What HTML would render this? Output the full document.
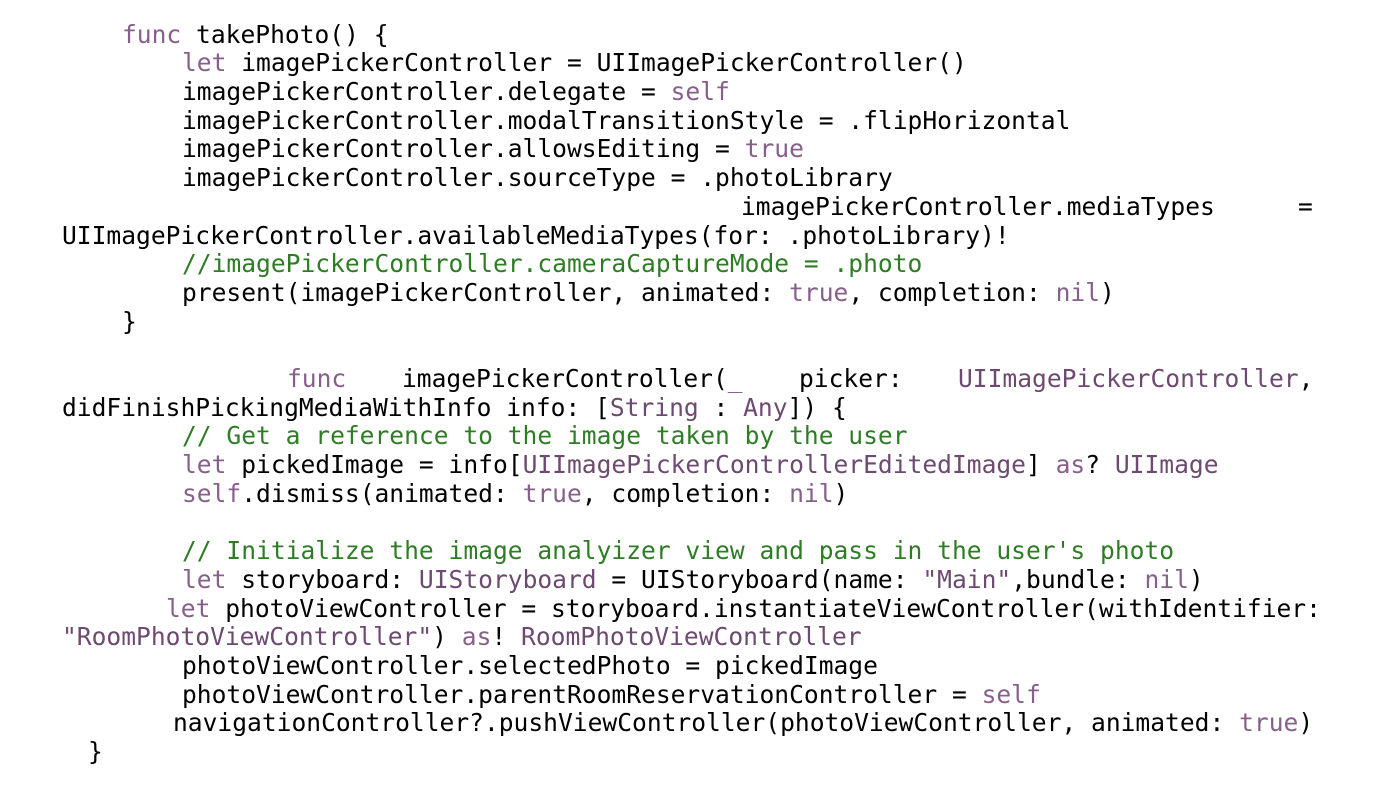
<!DOCTYPE html>
<html><head><meta charset="utf-8"><style>
body{margin:0;width:1400px;height:805px;background:#fff;position:relative;overflow:hidden;font-family:"DejaVu Sans Mono","Liberation Mono",monospace;font-size:24.6px;color:#000}
.l{position:absolute;white-space:pre;line-height:28.7px;height:28.7px}
.k{color:#86608a}.t{color:#6d4a70}.c{color:#2e7d25}.s{color:#6d4a70}
</style></head><body>
<div class="l" style="left:122px;top:20.6px"><span class="k">func</span> takePhoto() {</div>
<div class="l" style="left:182px;top:49.3px"><span class="k">let</span> imagePickerController = UIImagePickerController()</div>
<div class="l" style="left:182px;top:78px">imagePickerController.delegate = <span class="k">self</span></div>
<div class="l" style="left:182px;top:106.7px">imagePickerController.modalTransitionStyle = .flipHorizontal</div>
<div class="l" style="left:182px;top:135.4px">imagePickerController.allowsEditing = <span class="k">true</span></div>
<div class="l" style="left:182px;top:164.1px">imagePickerController.sourceType = .photoLibrary</div>
<div class="l" style="left:741px;top:192.8px">imagePickerController.mediaTypes</div>
<div class="l" style="left:1298px;top:192.8px">=</div>
<div class="l" style="left:62px;top:221.5px">UIImagePickerController.availableMediaTypes(for: .photoLibrary)!</div>
<div class="l c" style="left:182px;top:250.2px">//imagePickerController.cameraCaptureMode = .photo</div>
<div class="l" style="left:182px;top:278.9px">present(imagePickerController, animated: <span class="k">true</span>, completion: <span class="k">nil</span>)</div>
<div class="l" style="left:122px;top:307.6px">}</div>
<div class="l k" style="left:287px;top:365px">func</div>
<div class="l" style="left:402px;top:365px">imagePickerController(<span class="k">_</span></div>
<div class="l" style="left:799px;top:365px">picker:</div>
<div class="l" style="left:958px;top:365px"><span class="t">UIImagePickerController</span>,</div>
<div class="l" style="left:62px;top:393.7px">didFinishPickingMediaWithInfo info: [<span class="t">String</span> : <span class="t">Any</span>]) {</div>
<div class="l c" style="left:182px;top:422.4px">// Get a reference to the image taken by the user</div>
<div class="l" style="left:182px;top:451.1px"><span class="k">let</span> pickedImage = info[<span class="t">UIImagePickerControllerEditedImage</span>] <span class="k">as</span>? <span class="t">UIImage</span></div>
<div class="l" style="left:182px;top:479.8px"><span class="k">self</span>.dismiss(animated: <span class="k">true</span>, completion: <span class="k">nil</span>)</div>
<div class="l c" style="left:182px;top:537.2px">// Initialize the image analyizer view and pass in the user's photo</div>
<div class="l" style="left:182px;top:565.9px"><span class="k">let</span> storyboard: <span class="t">UIStoryboard</span> = UIStoryboard(name: <span class="s">"Main"</span>,bundle: <span class="k">nil</span>)</div>
<div class="l" style="left:166px;top:594.6px"><span class="k">let</span> photoViewController = storyboard.instantiateViewController(withIdentifier:</div>
<div class="l" style="left:62px;top:623.3px"><span class="s">"RoomPhotoViewController"</span>) <span class="k">as</span>! <span class="t">RoomPhotoViewController</span></div>
<div class="l" style="left:182px;top:652px">photoViewController.selectedPhoto = pickedImage</div>
<div class="l" style="left:182px;top:680.7px">photoViewController.parentRoomReservationController = <span class="k">self</span></div>
<div class="l" style="left:173px;top:709.4px">navigationController?.pushViewController(photoViewController, animated: <span class="k">true</span>)</div>
<div class="l" style="left:88px;top:738.1px">}</div>
</body></html>
